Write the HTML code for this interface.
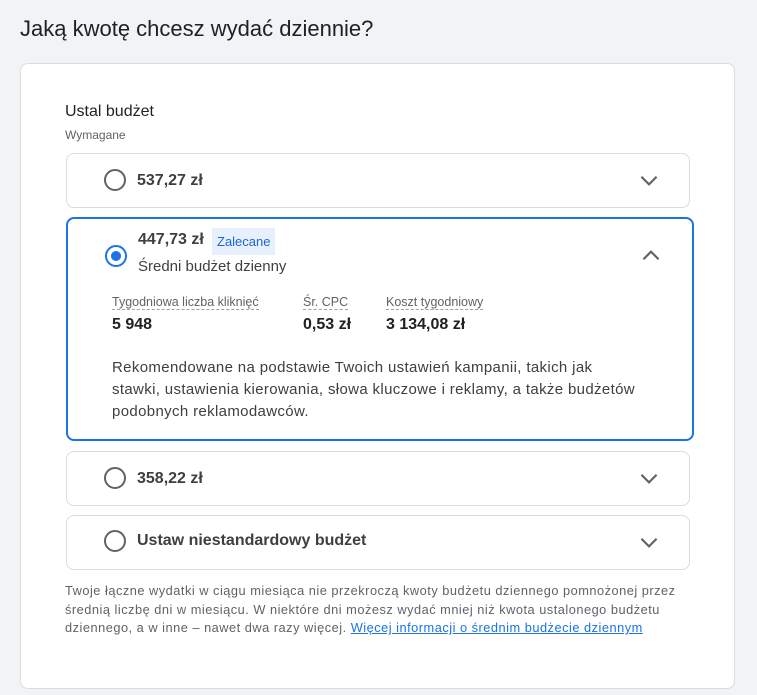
<!DOCTYPE html>
<html><head><meta charset="utf-8"><style>
*{margin:0;padding:0;box-sizing:border-box}
body{width:757px;height:695px;background:#f1f3f4;font-family:"Liberation Sans",sans-serif;color:#3c4043;position:relative;overflow:hidden}
.a{position:absolute;white-space:nowrap}
.card{position:absolute;left:20px;top:63px;width:715px;height:626px;background:#fff;border:1px solid #dadce0;border-radius:8px}
.box{position:absolute;left:66px;width:624px;border:1px solid #dadce0;border-radius:8px;background:#fff}
.radio{position:absolute;width:22px;height:22px;border:2px solid #5f6368;border-radius:50%}
.chev{position:absolute;width:26px;height:26px}
.t{font-size:16px;font-weight:bold;color:#3c4043}
.u{border-bottom:1px dashed #9aa0a6;font-size:12.5px;color:#5f6368}
.v{font-size:16px;font-weight:bold;color:#202124}
</style></head><body>
<div class="a" style="left:20px;top:16px;font-size:22px;color:#202124">Jaką kwotę chcesz wydać dziennie?</div>
<div class="card"></div>
<div class="a" style="left:65px;top:103px;font-size:16px;color:#202124">Ustal budżet</div>
<div class="a" style="left:65px;top:128px;font-size:12px;color:#5f6368">Wymagane</div>

<div class="box" style="top:153px;height:55px"></div>
<div class="radio" style="left:104px;top:169px"></div>
<div class="a t" style="left:137px;top:172px">537,27 zł</div>
<svg class="chev" style="left:636px;top:167px" viewBox="0 0 24 24"><path d="M5 9l7 7 7-7" fill="none" stroke="#5f6368" stroke-width="2"/></svg>

<div class="box" style="top:217px;height:224px;width:628px;border:2px solid #1a73e8"></div>
<div class="radio" style="left:105px;top:245px;border-color:#1a73e8"></div>
<div class="a" style="left:111px;top:251px;width:10px;height:10px;border-radius:50%;background:#1a73e8"></div>
<div class="a t" style="left:138px;top:231px">447,73 zł</div>
<div class="a" style="left:212px;top:228px;height:27px;padding:0 5px;background:#e8f0fe;color:#1967d2;font-size:13px;line-height:27px">Zalecane</div>
<div class="a" style="left:138px;top:258px;font-size:15px">Średni budżet dzienny</div>
<svg class="chev" style="left:638px;top:243px" viewBox="0 0 24 24"><path d="M5 15l7-7 7 7" fill="none" stroke="#5f6368" stroke-width="2"/></svg>
<div class="a u" style="left:112px;top:295px">Tygodniowa liczba kliknięć</div>
<div class="a u" style="left:303px;top:295px">Śr. CPC</div>
<div class="a u" style="left:386px;top:295px">Koszt tygodniowy</div>
<div class="a v" style="left:112px;top:316px">5 948</div>
<div class="a v" style="left:303px;top:316px">0,53 zł</div>
<div class="a v" style="left:386px;top:316px">3 134,08 zł</div>
<div class="a" style="left:112px;top:357px;font-size:15px;line-height:22px;color:#3c4043;letter-spacing:0.35px">Rekomendowane na podstawie Twoich ustawień kampanii, takich jak<br>stawki, ustawienia kierowania, słowa kluczowe i reklamy, a także budżetów<br>podobnych reklamodawców.</div>

<div class="box" style="top:451px;height:55px"></div>
<div class="radio" style="left:104px;top:467px"></div>
<div class="a t" style="left:137px;top:470px">358,22 zł</div>
<svg class="chev" style="left:636px;top:465px" viewBox="0 0 24 24"><path d="M5 9l7 7 7-7" fill="none" stroke="#5f6368" stroke-width="2"/></svg>

<div class="box" style="top:515px;height:55px"></div>
<div class="radio" style="left:104px;top:530px"></div>
<div class="a t" style="left:137px;top:532px">Ustaw niestandardowy budżet</div>
<svg class="chev" style="left:636px;top:529px" viewBox="0 0 24 24"><path d="M5 9l7 7 7-7" fill="none" stroke="#5f6368" stroke-width="2"/></svg>

<div class="a" style="left:65px;top:582px;font-size:12.8px;line-height:18.5px;color:#5f6368;letter-spacing:0.5px">Twoje łączne wydatki w ciągu miesiąca nie przekroczą kwoty budżetu dziennego pomnożonej przez<br>średnią liczbę dni w miesiącu. W niektóre dni możesz wydać mniej niż kwota ustalonego budżetu<br>dziennego, a w inne – nawet dwa razy więcej. <span style="color:#1a73e8;text-decoration:underline">Więcej informacji o średnim budżecie dziennym</span></div>
</body></html>
